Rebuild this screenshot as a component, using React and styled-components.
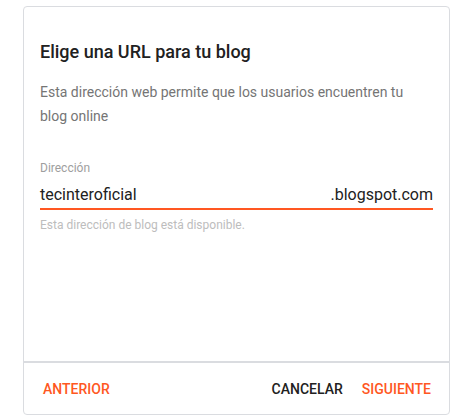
import React from 'react';
import styled, { createGlobalStyle } from 'styled-components';

const GlobalStyle = createGlobalStyle`
    html, body {
        margin: 0;
        padding: 0;
        background: #fff;
        font-family: Roboto, "Liberation Sans", Arial, sans-serif;
    }
`;

const Page = styled.div`
    padding: 6px 7px 0 23px;
`;

const Card = styled.div`
    box-sizing: border-box;
    width: 427px;
    height: 409px;
    border: 1px solid #dadce0;
    border-radius: 4px;
    display: flex;
    flex-direction: column;
    background: #fff;
`;

const Body = styled.div`
    flex: 1;
    padding: 33px 16px 0 16px;
`;

const Title = styled.h2`
    margin: 0;
    font-size: 18px;
    line-height: 24px;
    font-weight: 500;
    color: #212121;
`;

const Description = styled.p`
    margin: 16px 0 0;
    font-size: 14px;
    line-height: 24px;
    color: #757575;
`;

const Field = styled.div`
    margin-top: 32px;
`;

const Label = styled.div`
    font-size: 12px;
    line-height: 16px;
    color: #9e9e9e;
`;

const InputRow = styled.div`
    display: flex;
    align-items: center;
    justify-content: space-between;
    margin-top: 7px;
    border-bottom: 2px solid #ff5722;
    padding-bottom: 1px;
`;

const Value = styled.span`
    font-size: 16px;
    line-height: 24px;
    color: #212121;
`;

const Helper = styled.div`
    margin-top: 7px;
    font-size: 12px;
    line-height: 16px;
    color: #bdbdbd;
`;

const Footer = styled.div`
    height: 51px;
    border-top: 2px solid #dadce0;
    display: flex;
    align-items: center;
    padding: 0 10px 0 11px;
    gap: 3px;
`;

const Spacer = styled.div`
    flex: 1;
`;

const Button = styled.button`
    border: none;
    background: none;
    padding: 0 8px;
    font-family: inherit;
    font-size: 14px;
    line-height: 16px;
    font-weight: 500;
    text-transform: uppercase;
    color: ${props => (props.$accent ? '#ff5722' : '#212121')};
    cursor: pointer;
`;

const App = () => (
    <Page>
        <GlobalStyle />
        <Card>
            <Body>
                <Title>Elige una URL para tu blog</Title>
                <Description>
                    Esta dirección web permite que los usuarios encuentren tu blog online
                </Description>
                <Field>
                    <Label>Dirección</Label>
                    <InputRow>
                        <Value>tecinteroficial</Value>
                        <Value>.blogspot.com</Value>
                    </InputRow>
                    <Helper>Esta dirección de blog está disponible.</Helper>
                </Field>
            </Body>
            <Footer>
                <Button $accent>Anterior</Button>
                <Spacer />
                <Button>Cancelar</Button>
                <Button $accent>Siguiente</Button>
            </Footer>
        </Card>
    </Page>
);

export default App;
